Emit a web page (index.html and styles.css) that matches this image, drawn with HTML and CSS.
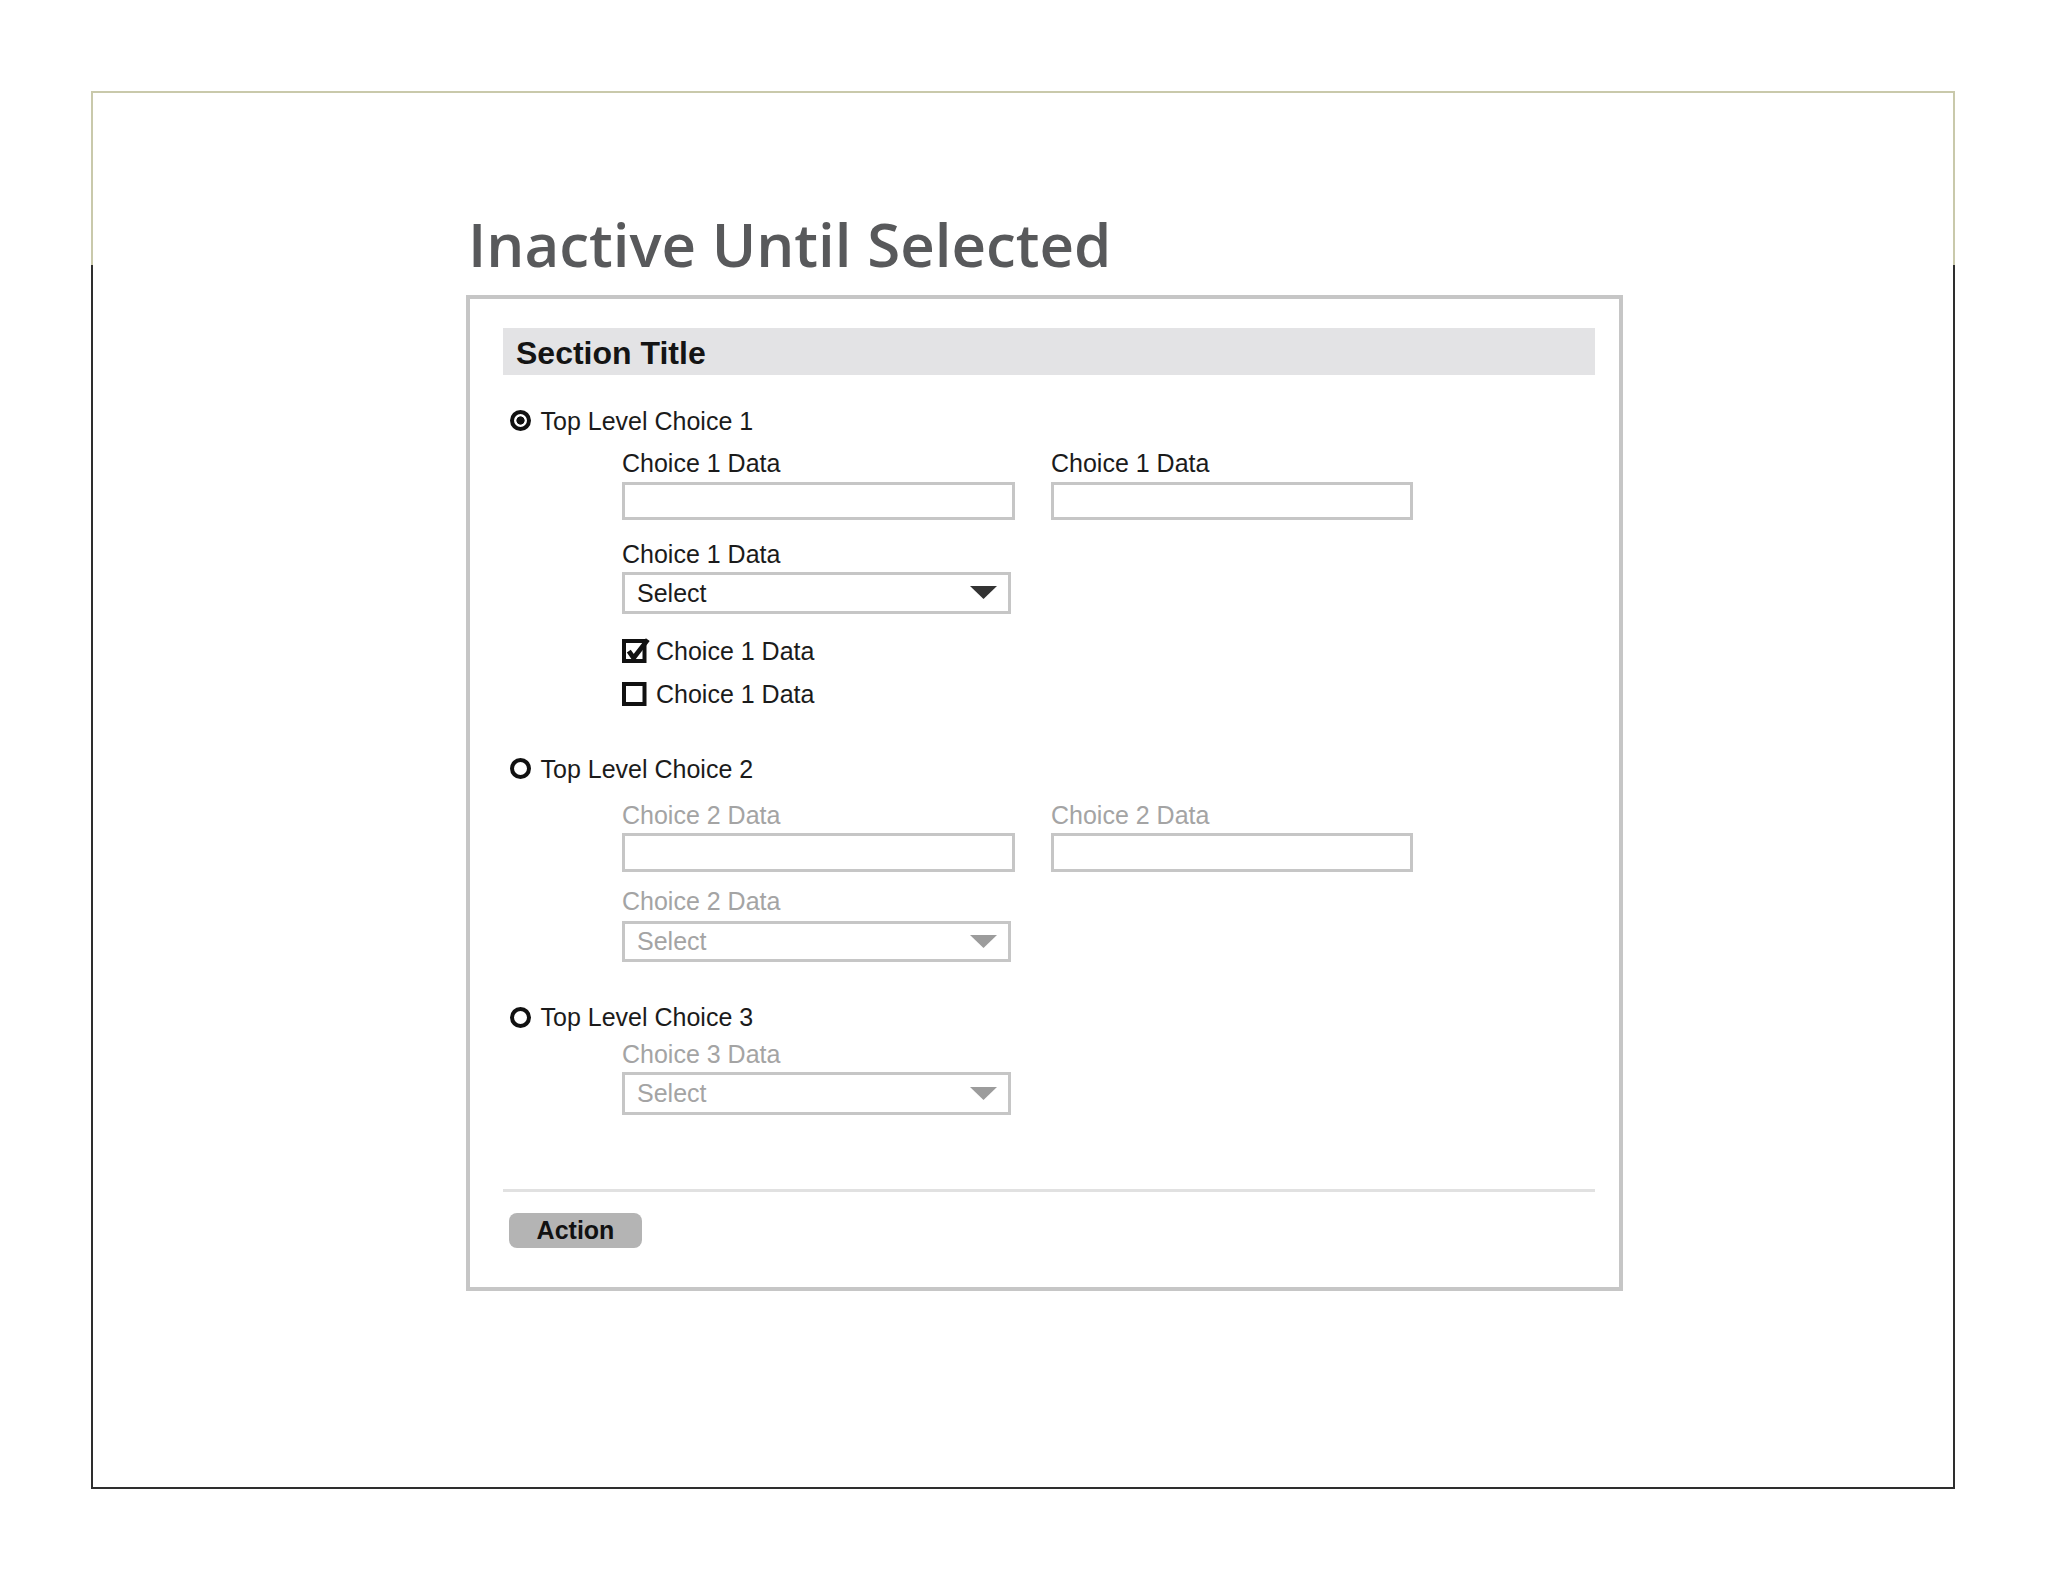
FILE: index.html
```html
<!DOCTYPE html>
<html lang="en">
<head>
<meta charset="utf-8">
<title>Inactive Until Selected</title>
<link rel="stylesheet" href="styles.css">
</head>
<body>
<div class="slide">
  <h1 class="title">Inactive Until Selected</h1>
  <div class="panel">
    <div class="section-bar">Section Title</div>

    <div class="choice choice-1">
      <span class="radio checked"></span><span class="choice-text">Top Level Choice 1</span>
    </div>
    <div class="sub sub-1">
      <div class="field-row">
        <div class="field col-a">
          <div class="label">Choice 1 Data</div>
          <div class="input input-1"></div>
        </div>
        <div class="field col-b">
          <div class="label">Choice 1 Data</div>
          <div class="input input-1"></div>
        </div>
      </div>
      <div class="field select-field-1">
        <div class="label">Choice 1 Data</div>
        <div class="select select-1">
          <span class="select-text">Select</span>
          <svg class="arrow" width="27" height="13" viewBox="0 0 27 13"><polygon points="0,0 27,0 13.5,13"/></svg>
        </div>
      </div>
      <div class="check-row check-first">
        <svg class="checkbox" width="28" height="26" viewBox="0 0 28 26">
          <rect x="2" y="3" width="20.5" height="20" fill="none" stroke="#111" stroke-width="4"/>
          <path d="M6.8 13.2 L11.6 20 L25.8 1.6" fill="none" stroke="#111" stroke-width="4.8" stroke-linejoin="miter"/>
        </svg>
        <span class="check-text">Choice 1 Data</span>
      </div>
      <div class="check-row check-second">
        <svg class="checkbox" width="28" height="26" viewBox="0 0 28 26">
          <rect x="2" y="3" width="20.5" height="20" fill="none" stroke="#111" stroke-width="4"/>
        </svg>
        <span class="check-text">Choice 1 Data</span>
      </div>
    </div>

    <div class="choice choice-2">
      <span class="radio"></span><span class="choice-text">Top Level Choice 2</span>
    </div>
    <div class="sub sub-2 inactive">
      <div class="field-row">
        <div class="field col-a">
          <div class="label">Choice 2 Data</div>
          <div class="input input-2"></div>
        </div>
        <div class="field col-b">
          <div class="label">Choice 2 Data</div>
          <div class="input input-2"></div>
        </div>
      </div>
      <div class="field select-field-2">
        <div class="label">Choice 2 Data</div>
        <div class="select select-2">
          <span class="select-text">Select</span>
          <svg class="arrow" width="27" height="13" viewBox="0 0 27 13"><polygon points="0,0 27,0 13.5,13"/></svg>
        </div>
      </div>
    </div>

    <div class="choice choice-3">
      <span class="radio"></span><span class="choice-text">Top Level Choice 3</span>
    </div>
    <div class="sub sub-3 inactive">
      <div class="field">
        <div class="label">Choice 3 Data</div>
        <div class="select select-3">
          <span class="select-text">Select</span>
          <svg class="arrow" width="27" height="13" viewBox="0 0 27 13"><polygon points="0,0 27,0 13.5,13"/></svg>
        </div>
      </div>
    </div>

    <div class="separator"></div>
    <button class="action" type="button">Action</button>
  </div>
</div>
</body>
</html>
```

FILE: styles.css
```css
html, body {
  margin: 0;
  padding: 0;
  background: #ffffff;
}

body {
  font-family: "Liberation Sans", Arial, sans-serif;
  color: #1b1b1b;
}

.slide {
  box-sizing: border-box;
  width: 1864px;
  height: 1398px;
  margin: 91px 0 0 91px;
  padding: 0 2px;
  border-top: 2px solid #c9c9ab;
  border-bottom: 2px solid #2e2e2e;
  background:
    linear-gradient(#c9c9ab, #c9c9ab) left top / 2px 172px no-repeat,
    linear-gradient(#2e2e2e, #2e2e2e) left 172px / 2px 100% no-repeat,
    linear-gradient(#c9c9ab, #c9c9ab) right top / 2px 172px no-repeat,
    linear-gradient(#2e2e2e, #2e2e2e) right 172px / 2px 100% no-repeat;
  overflow: hidden;
}

.title {
  margin: 115px 0 0 375px;
  font-family: "Open Sans", "Liberation Sans", sans-serif;
  font-weight: 600;
  font-size: 60px;
  line-height: 72px;
  letter-spacing: 0;
  color: #58595b;
}

.panel {
  box-sizing: border-box;
  width: 1157px;
  margin: 14.5px 0 0 373px;
  padding: 29px 24px 39.5px 33px;
  border: 4px solid #c6c6c6;
}

.section-bar {
  box-sizing: border-box;
  height: 47px;
  padding: 4px 0 0 13px;
  background: #e3e3e5;
  font-weight: bold;
  font-size: 32px;
  line-height: 43px;
  color: #141414;
}

.choice {
  display: flex;
  align-items: center;
  height: 30px;
  font-size: 25px;
  line-height: 30px;
}

.choice-1 { margin-top: 31px; }
.choice-2 { margin-top: 44.7px; }
.choice-3 { margin-top: 40.3px; }

.radio {
  box-sizing: border-box;
  width: 21px;
  height: 21px;
  margin: 0 9.5px 0 7px;
  border: 4px solid #111;
  border-radius: 50%;
  flex: none;
}

.radio.checked {
  background: radial-gradient(circle, #111 0 3.8px, transparent 4.4px);
}

.sub {
  margin-left: 119px;
  font-size: 25px;
}

.sub-1 { margin-top: 12.5px; }
.sub-2 { margin-top: 16px; }
.sub-3 { margin-top: 6.7px; }

.field-row {
  display: flex;
  gap: 36px;
}

.col-a { width: 393px; }
.col-b { width: 362px; }

.label {
  line-height: 30px;
  height: 30px;
  color: #1b1b1b;
}

.input {
  box-sizing: border-box;
  border: 3px solid #c6c6c6;
  background: #fff;
}

.input-1 { height: 38px; margin-top: 3.7px; }
.input-2 { height: 39px; margin-top: 2.7px; }

.select-field-1 { margin-top: 19px; }
.select-field-2 { margin-top: 14px; }

.select {
  box-sizing: border-box;
  display: flex;
  align-items: center;
  justify-content: space-between;
  width: 389px;
  padding: 0 11px 0 12px;
  border: 3px solid #c6c6c6;
  line-height: 30px;
  color: #1b1b1b;
}

.select-1 { height: 42px; margin-top: 3px; }
.select-2 { height: 41px; margin-top: 5.4px; }
.select-3 { height: 43px; margin-top: 3px; }

.arrow {
  display: block;
  fill: #333333;
}

.check-row {
  display: flex;
  align-items: center;
  height: 30px;
  line-height: 30px;
}

.check-first { margin-top: 22.5px; }
.check-second { margin-top: 13px; }

.checkbox {
  display: block;
  flex: none;
  overflow: visible;
}

.check-text {
  margin-left: 6px;
}

.inactive .label,
.inactive .select-text {
  color: #a4a4a4;
}

.inactive .arrow {
  fill: #9c9c9c;
}

.separator {
  height: 3px;
  margin-top: 74.5px;
  background: #e1e1e1;
}

.action {
  display: block;
  box-sizing: border-box;
  width: 133px;
  height: 35px;
  margin: 20.5px 0 0 6px;
  padding: 0;
  border: none;
  border-radius: 8px;
  background: #b4b4b4;
  font-family: "Liberation Sans", Arial, sans-serif;
  font-weight: bold;
  font-size: 25px;
  line-height: 35px;
  color: #111;
  text-align: center;
}
```
